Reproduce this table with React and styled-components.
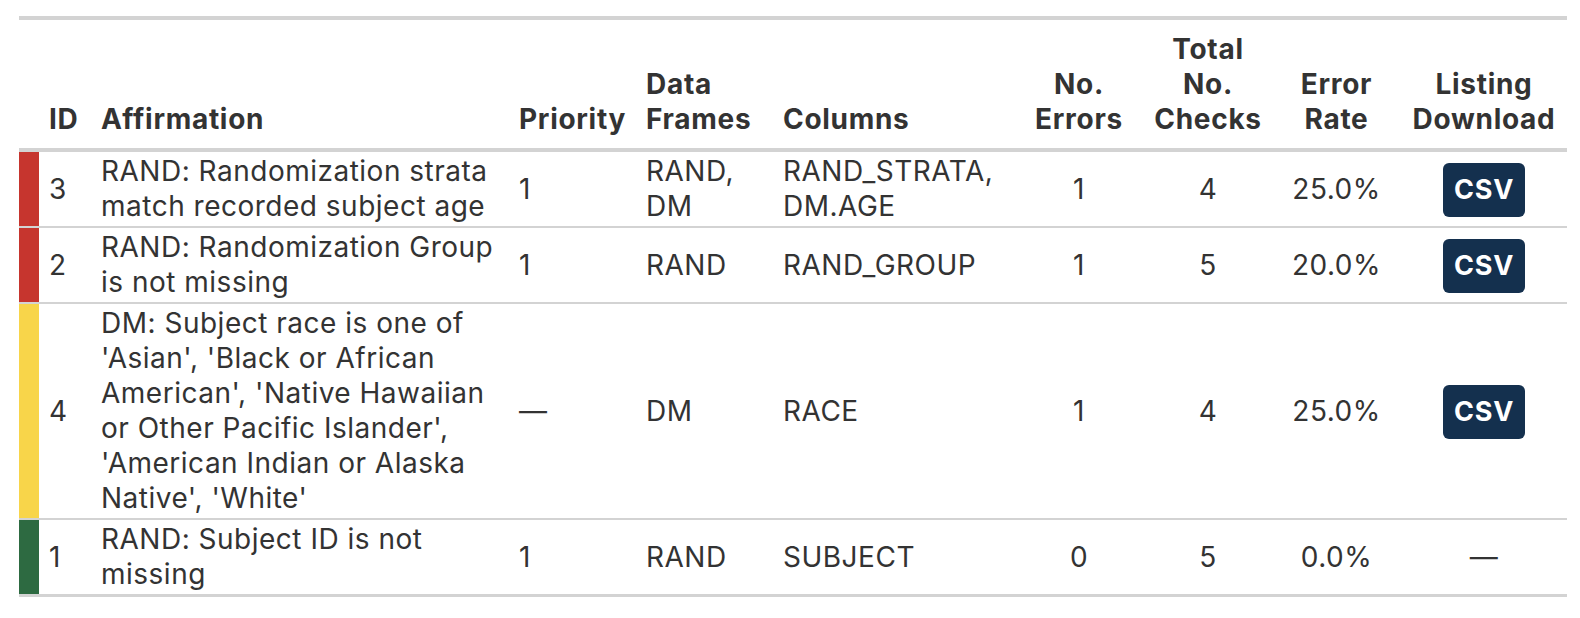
import React from "react";
import styled, { createGlobalStyle } from "styled-components";

const Global = createGlobalStyle`
  html, body { margin: 0; padding: 0; background: #ffffff; }
  body { font-family: Inter, "Liberation Sans", sans-serif; color: #333333; }
`;

const Page = styled.div`
  padding: 16px 0 0 19px;
`;

const Table = styled.table`
  width: 1548px;
  table-layout: fixed;
  border-collapse: separate;
  border-spacing: 0;
  font-size: 28px;
  line-height: 35px;
  letter-spacing: 0.5px;
  color: #333333;
  border-top: 4px solid #d3d3d3;
  border-bottom: 3px solid #d3d3d3;
`;

const HeadCell = styled.th`
  text-align: ${(p) => p.$align || "left"};
  vertical-align: bottom;
  font-weight: 700;
  letter-spacing: 0.7px;
  padding: 12px 10px 11px;
  border-bottom: 4px solid #d3d3d3;
  white-space: normal;
`;

const Cell = styled.td`
  text-align: ${(p) => p.$align || "left"};
  vertical-align: middle;
  padding: 2px 10px;
  border-bottom: ${(p) => (p.$last ? "0" : "2px solid #d3d3d3")};
`;

const StatusCell = styled.td`
  padding: 0;
  background: ${(p) => p.$color};
  border-bottom: ${(p) => (p.$last ? "0" : "2px solid #d3d3d3")};
`;

const HeadBlank = styled.th`
  padding: 0;
  border-bottom: 4px solid #d3d3d3;
`;

const CsvButton = styled.button`
  display: inline-block;
  width: 82px;
  height: 54px;
  margin: 7px 0 5px;
  padding: 0;
  border: 0;
  border-radius: 6px;
  background: #14304e;
  color: #ffffff;
  font-family: Inter, "Liberation Sans", sans-serif;
  font-size: 27px;
  font-weight: 700;
  line-height: 54px;
  letter-spacing: 0.8px;
  vertical-align: middle;
  cursor: pointer;
`;

const STATUS = {
  red: "#c6352e",
  yellow: "#f8d54a",
  green: "#2d6a41",
};

const widths = [20, 52, 418, 127, 137, 241, 130, 128, 129, 166];

const rows = [
  {
    status: "red",
    id: "3",
    text: "RAND: Randomization strata match recorded subject age",
    priority: "1",
    frames: "RAND, DM",
    columns: "RAND_STRATA, DM.AGE",
    errors: "1",
    checks: "4",
    rate: "25.0%",
    csv: true,
  },
  {
    status: "red",
    id: "2",
    text: "RAND: Randomization Group is not missing",
    priority: "1",
    frames: "RAND",
    columns: "RAND_GROUP",
    errors: "1",
    checks: "5",
    rate: "20.0%",
    csv: true,
  },
  {
    status: "yellow",
    id: "4",
    text:
      "DM: Subject race is one of 'Asian', 'Black or African American', 'Native Hawaiian or Other Pacific Islander', 'American Indian or Alaska Native', 'White'",
    priority: "—",
    frames: "DM",
    columns: "RACE",
    errors: "1",
    checks: "4",
    rate: "25.0%",
    csv: true,
  },
  {
    status: "green",
    id: "1",
    text: "RAND: Subject ID is not missing",
    priority: "1",
    frames: "RAND",
    columns: "SUBJECT",
    errors: "0",
    checks: "5",
    rate: "0.0%",
    csv: false,
  },
];

export default function App() {
  return (
    <Page>
      <Global />
      <Table>
        <colgroup>
          {widths.map((w, i) => (
            <col key={i} style={{ width: w }} />
          ))}
        </colgroup>
        <thead>
          <tr>
            <HeadBlank />
            <HeadCell>ID</HeadCell>
            <HeadCell>Affirmation</HeadCell>
            <HeadCell>Priority</HeadCell>
            <HeadCell>Data Frames</HeadCell>
            <HeadCell>Columns</HeadCell>
            <HeadCell $align="center">No. Errors</HeadCell>
            <HeadCell $align="center">Total No. Checks</HeadCell>
            <HeadCell $align="center">Error Rate</HeadCell>
            <HeadCell $align="center">Listing Download</HeadCell>
          </tr>
        </thead>
        <tbody>
          {rows.map((r, i) => {
            const last = i === rows.length - 1;
            return (
              <tr key={r.id}>
                <StatusCell $color={STATUS[r.status]} $last={last} />
                <Cell $last={last}>{r.id}</Cell>
                <Cell $last={last}>{r.text}</Cell>
                <Cell $last={last}>{r.priority}</Cell>
                <Cell $last={last}>{r.frames}</Cell>
                <Cell $last={last}>{r.columns}</Cell>
                <Cell $align="center" $last={last}>{r.errors}</Cell>
                <Cell $align="center" $last={last}>{r.checks}</Cell>
                <Cell $align="center" $last={last}>{r.rate}</Cell>
                <Cell $align="center" $last={last}>
                  {r.csv ? <CsvButton type="button">CSV</CsvButton> : "—"}
                </Cell>
              </tr>
            );
          })}
        </tbody>
      </Table>
    </Page>
  );
}
